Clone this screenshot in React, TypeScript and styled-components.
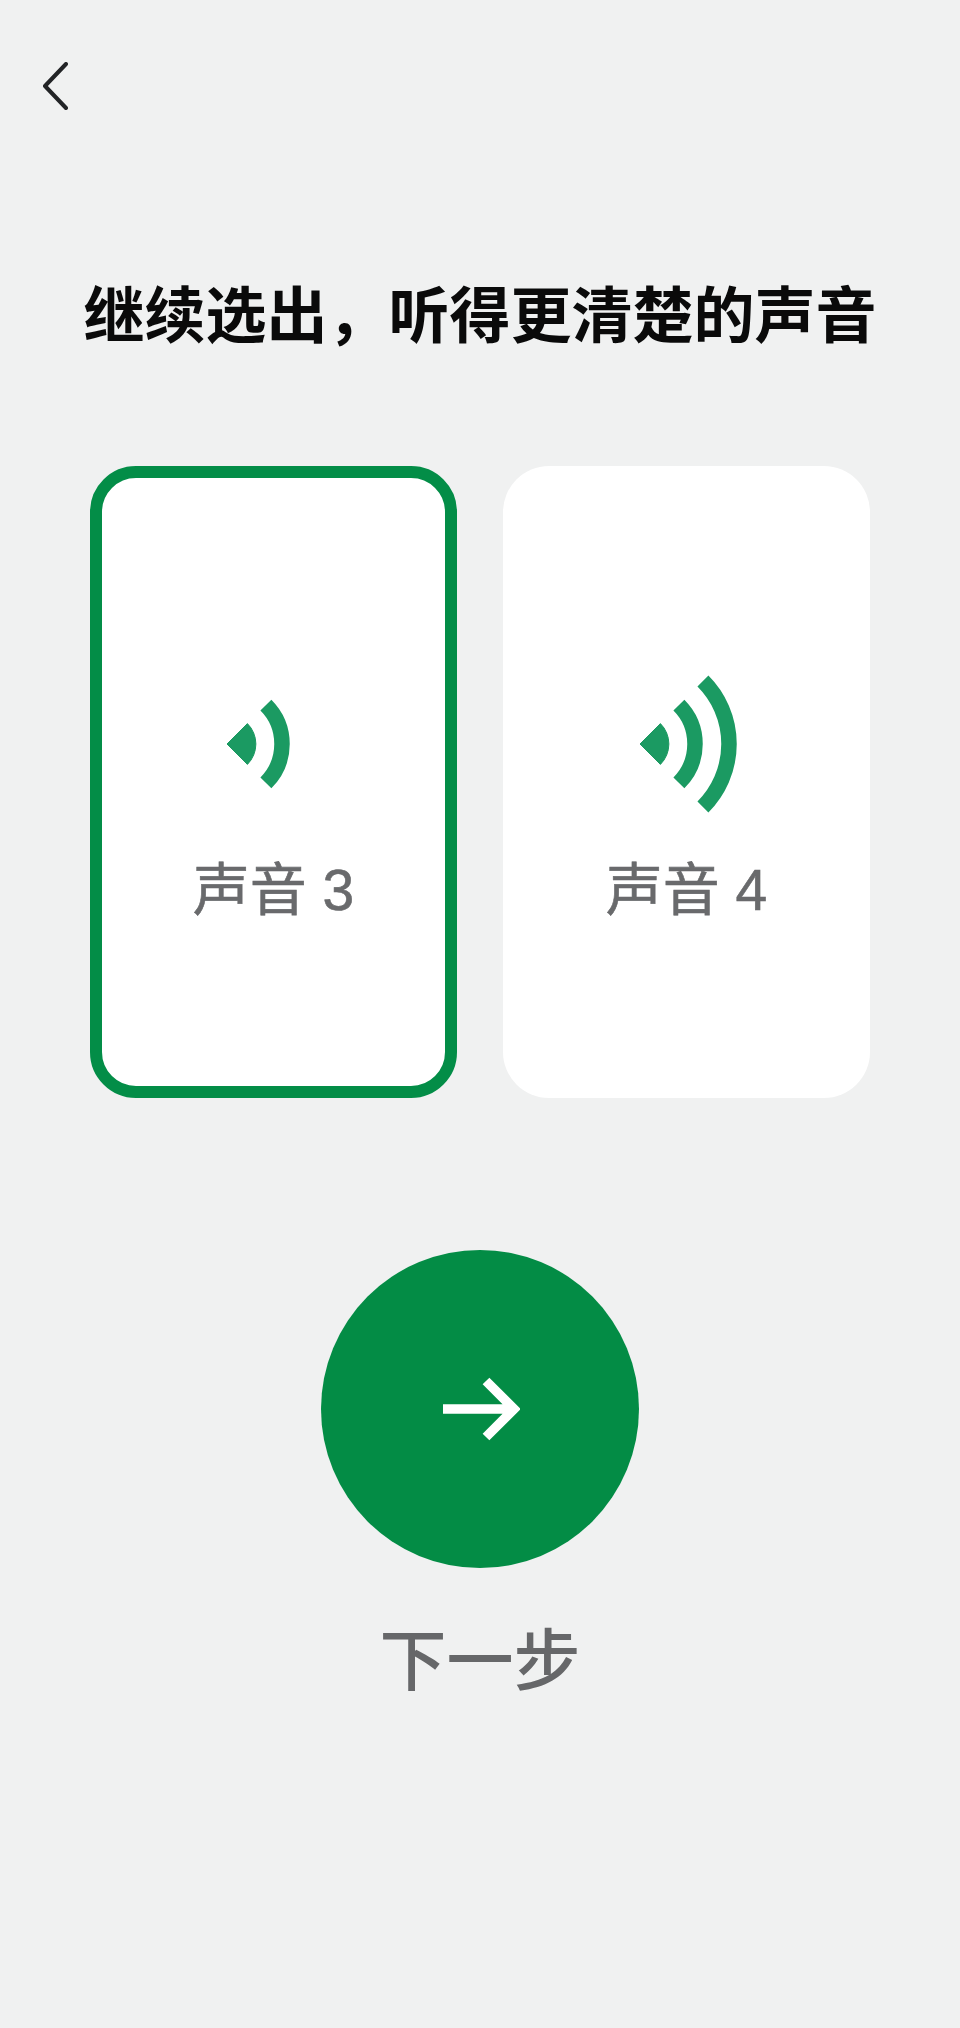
import React from 'react';
import styled, { createGlobalStyle } from 'styled-components';

const voices = [
  { id: 3, waves: 1, selected: true },
  { id: 4, waves: 2, selected: false },
];

const waveRadii = [55, 89];

function SoundIcon({ waves }: { waves: number }) {
  return (
    <IconSvg viewBox="-8 -75 110 150">
      <path d="M0 0L20.4 -20.4A28.8 28.8 0 0 1 20.4 20.4Z" fill="#1b9a62" stroke="#1b9a62" strokeWidth="1" strokeLinejoin="round" />
      {waveRadii.slice(0, waves).map((r) => {
        const d = r * Math.SQRT1_2;
        return <path key={r} d={`M${d} ${-d}A${r} ${r} 0 0 1 ${d} ${d}`} fill="none" stroke="#1b9a62" strokeWidth="15.5" />;
      })}
    </IconSvg>
  );
}

export default function App() {
  return (
    <>
      <GlobalStyle />
      <Page>
        <BackButton type="button" aria-label="返回">
          <svg width="26" height="48" viewBox="0 0 26 48">
            <path d="M24 2L3 24L24 46" fill="none" stroke="#222426" strokeWidth="4" strokeLinecap="round" strokeLinejoin="round" />
          </svg>
        </BackButton>

        <Title>继续选出，听得更清楚的声音</Title>

        <CardRow>
          {voices.map((voice) => (
            <VoiceCard key={voice.id} $selected={voice.selected}>
              <SoundIcon waves={voice.waves} />
              <VoiceLabel>声音 {voice.id}</VoiceLabel>
            </VoiceCard>
          ))}
        </CardRow>

        <NextButton type="button" aria-label="下一步">
          <svg width="80" height="64" viewBox="0 0 80 64">
            <path d="M3 32H74M46 4L74 32L46 60" fill="none" stroke="#fff" strokeWidth="9.5" />
          </svg>
        </NextButton>
        <NextLabel>下一步</NextLabel>
      </Page>
    </>
  );
}

const GlobalStyle = createGlobalStyle`
  html, body {
    margin: 0;
    padding: 0;
    background: #f0f1f1;
  }
  * {
    box-sizing: border-box;
  }
`;

const Page = styled.div`
  width: 960px;
  height: 2028px;
  padding-top: 62px;
  display: flex;
  flex-direction: column;
  align-items: center;
  background: #f0f1f1;
  font-family: "Noto Sans CJK SC", "Noto Sans", sans-serif;
`;

const BackButton = styled.button`
  align-self: flex-start;
  width: 26px;
  height: 48px;
  margin-left: 42px;
  padding: 0;
  border: 0;
  background: none;
  display: block;

  svg {
    display: block;
  }
`;

const Title = styled.h1`
  margin: 159px 0 0;
  font-size: 61px;
  line-height: 86px;
  font-weight: 700;
  color: #0a0a0a;
  white-space: nowrap;
`;

const CardRow = styled.div`
  display: flex;
  gap: 46px;
  margin-top: 111px;
`;

const VoiceCard = styled.div<{ $selected: boolean }>`
  width: 367px;
  height: 632px;
  padding-top: 191px;
  display: flex;
  flex-direction: column;
  align-items: center;
  border: 12px solid ${(p) => (p.$selected ? '#038d47' : 'transparent')};
  border-radius: 46px;
  background: #fff;
`;

const IconSvg = styled.svg`
  width: 110px;
  height: 150px;
  display: block;
`;

const VoiceLabel = styled.div`
  margin-top: 31px;
  font-family: "Liberation Sans", "Noto Sans CJK SC", sans-serif;
  font-size: 57px;
  line-height: 80px;
  font-weight: 400;
  color: #696a6c;
  -webkit-text-stroke: 0.6px #696a6c;
  white-space: nowrap;
`;

const NextButton = styled.button`
  width: 318px;
  height: 318px;
  margin-top: 152px;
  padding: 0;
  border: 0;
  border-radius: 50%;
  background: #038c45;
  display: flex;
  align-items: center;
  justify-content: center;
`;

const NextLabel = styled.div`
  margin-top: 41px;
  font-size: 67px;
  line-height: 94px;
  font-weight: 500;
  color: #666769;
`;
